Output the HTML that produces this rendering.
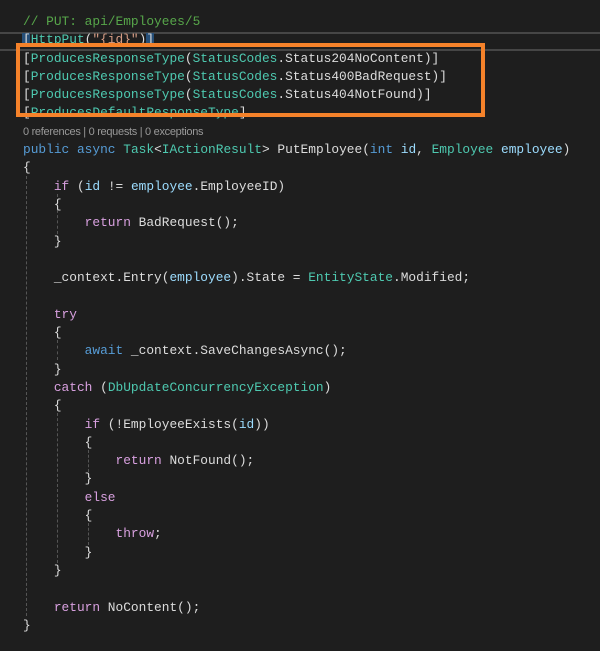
<!DOCTYPE html>
<html><head><style>
html,body{margin:0;padding:0;background:#1e1e1e;width:600px;height:651px;overflow:hidden}
.c{position:absolute;left:23px;top:13px;font-family:"Liberation Mono",monospace;font-size:12.85px;line-height:18.3px;color:#dcdcdc;white-space:pre}
.cm{color:#57a64a}.k{color:#569cd6}.t{color:#4ec9b0}.s{color:#d69d85}.p{color:#d8a0df}.v{color:#9cdcfe}.m{color:#dcdcaa}
.lens{font-family:"Liberation Sans",sans-serif;font-size:11px;color:#999;letter-spacing:-0.3px}
.cur{position:absolute;left:0;width:600px;top:32px;height:15px;border-top:2px solid #464646;border-bottom:2px solid #464646}
.box{position:absolute;left:16px;top:43px;width:461px;height:66px;border:4px solid #f5822a}
.sel{position:absolute;top:33px;width:8px;height:14px;background:#264f78}
.g{position:absolute;width:0;border-left:1px dashed #555}
</style></head><body>
<div class="cur"></div>
<div class="sel" style="left:22px"></div>
<div class="sel" style="left:146px"></div>
<div class="g" style="left:26px;top:176px;height:440px"></div>
<div class="g" style="left:57px;top:194px;height:40px"></div>
<div class="g" style="left:57px;top:340px;height:20px"></div>
<div class="g" style="left:57px;top:413px;height:150px"></div>
<div class="g" style="left:88px;top:450px;height:22px"></div>
<div class="g" style="left:88px;top:523px;height:22px"></div>
<div class="c"><span class="cm">// PUT: api/Employees/5</span>
[<span class="t">HttpPut</span>(<span class="s">"{id}"</span>)]
[<span class="t">ProducesResponseType</span>(<span class="t">StatusCodes</span>.Status204NoContent)]
[<span class="t">ProducesResponseType</span>(<span class="t">StatusCodes</span>.Status400BadRequest)]
[<span class="t">ProducesResponseType</span>(<span class="t">StatusCodes</span>.Status404NotFound)]
[<span class="t">ProducesDefaultResponseType</span>]
<span class="lens">0 references | 0 requests | 0 exceptions</span>
<span class="k">public</span> <span class="k">async</span> <span class="t">Task</span>&lt;<span class="t">IActionResult</span>&gt; PutEmployee(<span class="k">int</span> <span class="v">id</span>, <span class="t">Employee</span> <span class="v">employee</span>)
{
    <span class="p">if</span> (<span class="v">id</span> != <span class="v">employee</span>.EmployeeID)
    {
        <span class="p">return</span> BadRequest();
    }

    _context.Entry(<span class="v">employee</span>).State = <span class="t">EntityState</span>.Modified;

    <span class="p">try</span>
    {
        <span class="k">await</span> _context.SaveChangesAsync();
    }
    <span class="p">catch</span> (<span class="t">DbUpdateConcurrencyException</span>)
    {
        <span class="p">if</span> (!EmployeeExists(<span class="v">id</span>))
        {
            <span class="p">return</span> NotFound();
        }
        <span class="p">else</span>
        {
            <span class="p">throw</span>;
        }
    }

    <span class="p">return</span> NoContent();
}</div>
<div class="box"></div>
</body></html>
